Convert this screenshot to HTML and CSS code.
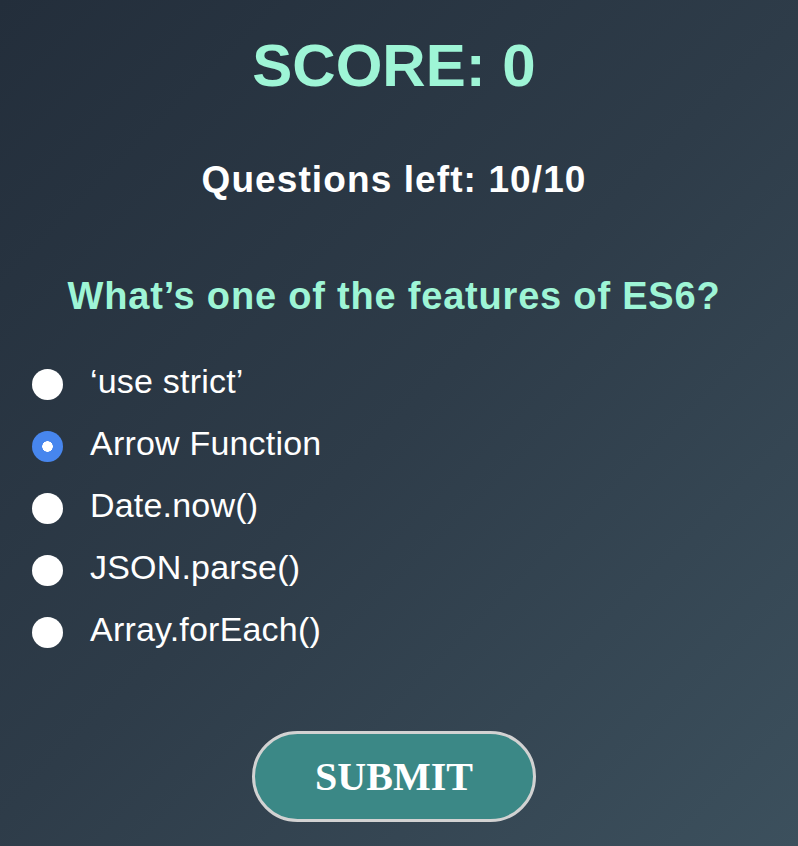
FILE: index.html
```html
<!DOCTYPE html>
<html lang="en">
<head>
<meta charset="utf-8">
<title>Quiz</title>
<link rel="stylesheet" href="styles.css">
</head>
<body>
<main class="quiz">
  <h1 class="score">SCORE: 0</h1>
  <h2 class="left">Questions left: 10/10</h2>
  <h3 class="question">What’s one of the features of ES6?</h3>
  <form class="options">
    <label class="option"><input type="radio" name="a" class="radio"><span>‘use strict’</span></label>
    <label class="option"><input type="radio" name="a" class="radio" checked><span>Arrow Function</span></label>
    <label class="option"><input type="radio" name="a" class="radio"><span>Date.now()</span></label>
    <label class="option"><input type="radio" name="a" class="radio"><span>JSON.parse()</span></label>
    <label class="option"><input type="radio" name="a" class="radio"><span>Array.forEach()</span></label>
  </form>
  <button class="submit" type="button">SUBMIT</button>
</main>
</body>
</html>
```
FILE: styles.css
```css
html, body {
  margin: 0;
  padding: 0;
}
body {
  min-height: 846px;
  background: linear-gradient(135deg, #232e3b 0%, #2e3c49 50%, #3c505d 100%);
  font-family: "Liberation Sans", Arial, sans-serif;
  overflow: hidden;
}
.quiz {
  width: 788px;
  display: flex;
  flex-direction: column;
  align-items: center;
}
.score {
  margin: 31px 0 0;
  font-size: 60px;
  font-weight: bold;
  line-height: normal;
  color: #9ef5d6;
}
.left {
  margin: 59px 0 0;
  font-size: 37px;
  font-weight: bold;
  letter-spacing: 1.1px;
  line-height: normal;
  color: #ffffff;
}
.question {
  margin: 74px 0 0;
  font-size: 38px;
  font-weight: bold;
  letter-spacing: 0.8px;
  line-height: normal;
  color: #9ef5d6;
}
.options {
  align-self: stretch;
  margin: 32px 0 0;
  padding-left: 32px;
  display: flex;
  flex-direction: column;
}
.option {
  display: flex;
  align-items: center;
  gap: 27px;
  height: 62px;
  font-size: 34px;
  line-height: 62px;
  letter-spacing: 0.2px;
  color: #ffffff;
}
.radio {
  appearance: none;
  -webkit-appearance: none;
  margin: 6px 0 0;
  width: 31px;
  height: 31px;
  border-radius: 50%;
  background: #ffffff;
  flex: none;
}
.radio:checked {
  background: radial-gradient(circle, #ffffff 0 5px, #4786ee 5.5px);
}
.submit {
  margin-top: 71px;
  width: 284px;
  height: 91px;
  border: 3px solid #d2d2d2;
  border-radius: 46px;
  background: #3b8886;
  color: #ffffff;
  font-family: "Liberation Serif", "Times New Roman", serif;
  font-weight: bold;
  font-size: 40px;
  padding: 0;
}
```
